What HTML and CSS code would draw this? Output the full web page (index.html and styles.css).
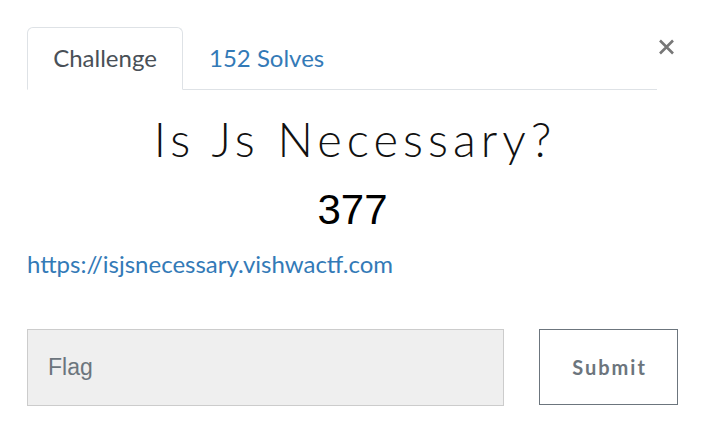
FILE: index.html
```html
<!DOCTYPE html>
<html>
<head>
<meta charset="utf-8">
<link rel="stylesheet" href="styles.css">
</head>
<body>
<div class="modal">
  <div class="header">
    <nav class="tabs">
      <a class="tab active">Challenge</a>
      <a class="tab">152 Solves</a>
    </nav>
    <button class="close" aria-label="Close">
      <svg width="17" height="16" viewBox="0 0 17 16"><path d="M2 1.5 L15 14.5 M15 1.5 L2 14.5" stroke="#777" stroke-width="2.6" fill="none"/></svg>
    </button>
  </div>
  <h2 class="title">Is Js Necessary?</h2>
  <h3 class="points">377</h3>
  <a class="link">https://isjsnecessary.vishwactf.com</a>
  <form class="submit-row">
    <input class="flag" type="text" placeholder="Flag">
    <button class="submit" type="button">Submit</button>
  </form>
</div>
</body>
</html>
```
FILE: styles.css
```css
html, body {
  margin: 0;
  padding: 0;
  background: #fff;
}
.modal {
  width: 708px;
  height: 427px;
  box-sizing: border-box;
  padding: 27px 30px 0 27px;
  font-family: "Lato", "Liberation Sans", sans-serif;
}
.header {
  display: flex;
  align-items: flex-start;
}
.tabs {
  flex: 1;
  display: flex;
  border-bottom: 1px solid #dee2e6;
  height: 62px;
}
.tab {
  display: flex;
  align-items: center;
  justify-content: center;
  box-sizing: border-box;
  height: 63px;
  font-size: 24px;
  color: #337ab7;
  border: 1px solid transparent;
  border-radius: 6px 6px 0 0;
  padding: 0 26px 2px 25px;
}
.tab.active {
  color: #495057;
  border-color: #dee2e6;
  border-bottom-color: #fff;
  background: #fff;
  width: 156px;
  padding: 0 0 2px;
}
.close {
  border: 0;
  background: none;
  padding: 0;
  margin: 12px 3px 0 1px;
  width: 17px;
  height: 16px;
  display: block;
}
.close svg { display: block; }
.title {
  margin: 24px 0 0;
  padding-left: 5px;
  text-align: center;
  font-family: "Lato", sans-serif;
  font-weight: 300;
  font-size: 47px;
  line-height: 50px;
  letter-spacing: 5px;
  color: #111;
}
.points {
  margin: 23px 0 0;
  text-align: center;
  font-family: "Liberation Sans", Arial, sans-serif;
  font-weight: 400;
  font-size: 42px;
  line-height: 46px;
  color: #000;
}
.link {
  display: block;
  margin-top: 16px;
  font-size: 24px;
  line-height: 30px;
  color: #337ab7;
}
.submit-row {
  display: flex;
  margin: 50px 0 0;
  gap: 35px;
}
.flag {
  box-sizing: border-box;
  width: 477px;
  height: 77px;
  background: #efefef;
  border: 1px solid #ccc;
  padding: 0 20px;
  font-family: "Liberation Sans", Arial, sans-serif;
  font-size: 23px;
  outline: none;
}
.flag::placeholder { color: #6c757d; }
.submit {
  box-sizing: border-box;
  width: 139px;
  height: 76px;
  background: #fff;
  border: 1px solid #6c757d;
  font-family: "Lato", sans-serif;
  font-weight: 700;
  font-size: 20px;
  letter-spacing: 2px;
  color: #6c757d;
  padding: 0 0 0 2px;
}
```
